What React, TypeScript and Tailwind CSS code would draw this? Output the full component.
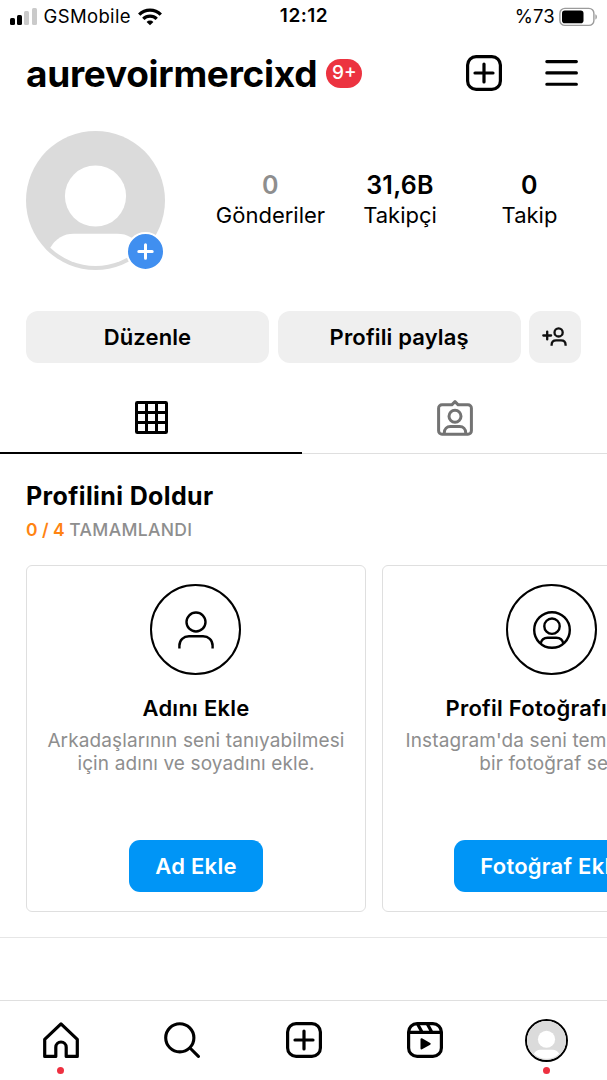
import type { ReactNode } from "react";
import { cx } from "class-variance-authority";

// ── Icons ──────────────────────────────────
function WifiIcon() {
  return (
    <svg width="24" height="18" viewBox="0 0 24 18" fill="none" stroke="#000" strokeWidth="3.3">
      <path d="M1.2 6.6a15.3 15.3 0 0 1 21.6 0" />
      <path d="M5.3 10.9a9.5 9.5 0 0 1 13.4 0" />
      <path d="M12 17.3 8.6 13.9a4.8 4.8 0 0 1 6.8 0Z" fill="#000" stroke="none" />
    </svg>
  );
}

function BatteryIcon() {
  return (
    <svg width="39" height="20" viewBox="0 0 39 20" fill="none">
      <rect x="0.9" y="1.4" width="34" height="17" rx="5" stroke="#9b9b9b" strokeWidth="1.4" />
      <rect x="3" y="3.6" width="21.5" height="12.6" rx="2.8" fill="#000" />
      <path d="M36.4 7.2c2 .8 2 4.6 0 5.4Z" fill="#9b9b9b" />
    </svg>
  );
}

function PlusBoxIcon() {
  return (
    <svg width="36" height="36" viewBox="0 0 36 36" fill="none" stroke="#000" strokeWidth="3.2" strokeLinecap="round">
      <rect x="1.6" y="1.6" width="32.8" height="32.8" rx="8.5" />
      <path d="M18 9v18M9 18h18" />
    </svg>
  );
}

function MenuIcon() {
  return (
    <svg width="33" height="28" viewBox="0 0 33 28" stroke="#000" strokeWidth="3.1" strokeLinecap="round">
      <path d="M1.8 2.6h29.6M1.8 13.9h29.6M1.8 25.2h29.6" />
    </svg>
  );
}

function AvatarIcon({ size }: { size: number }) {
  return (
    <svg width={size} height={size} viewBox="0 0 140 140" className="block">
      <circle cx="70" cy="70" r="70" fill="#dbdbdb" />
      <circle cx="70" cy="65.5" r="30.8" fill="#fff" />
      <path d="M24.4 117.5Q33 103.5 48 103.5H92Q107 103.5 115.6 117.5A65.8 65.8 0 0 1 24.4 117.5Z" fill="#fff" />
    </svg>
  );
}

function AddPersonIcon() {
  return (
    <svg width="26" height="20" viewBox="0 0 26 20" fill="none" stroke="#111" strokeWidth="2.3">
      <path d="M5.2 4.6v7.8M1.3 8.5h7.8" strokeLinecap="round" />
      <circle cx="16.6" cy="5.4" r="4.1" />
      <path d="M9.6 18.8v-.9c0-2.9 1.9-4.6 4.6-4.6h4.8c2.7 0 4.6 1.7 4.6 4.6v.9" />
    </svg>
  );
}

function GridIcon() {
  return (
    <svg width="33" height="33" viewBox="0 0 33 33" fill="none" stroke="#000" strokeWidth="3">
      <rect x="1.5" y="1.5" width="30" height="30" rx="0.8" />
      <path d="M11.5 1.5v30M21.5 1.5v30M1.5 11.5h30M1.5 21.5h30" />
    </svg>
  );
}

function TaggedIcon() {
  return (
    <svg width="36" height="36" viewBox="0 0 36 36" fill="none" stroke="#737373" strokeWidth="3" strokeLinejoin="round">
      <path d="M14.8 4.8 18 1.7l3.2 3.1H31a3.4 3.4 0 0 1 3.4 3.4v22.6a3.4 3.4 0 0 1-3.4 3.4H5a3.4 3.4 0 0 1-3.4-3.4V8.2A3.4 3.4 0 0 1 5 4.8Z" />
      <circle cx="18" cy="16.2" r="6" />
      <path d="M7.3 34v-1.2c0-4 2.6-6.2 6-6.2h9.4c3.4 0 6 2.2 6 6.2V34" />
    </svg>
  );
}

function PersonIcon() {
  return (
    <svg width="36" height="38" viewBox="0 0 36 38" fill="none" stroke="#000" strokeWidth="2.4">
      <circle cx="18" cy="11" r="9.5" />
      <path d="M1.4 37.4v-2.6c0-6 4.2-9.5 9.6-9.5h14c5.4 0 9.6 3.5 9.6 9.5v2.6" />
    </svg>
  );
}

function PersonCircleIcon() {
  return (
    <svg width="38" height="38" viewBox="0 0 38 38" fill="none" stroke="#000" strokeWidth="2.4">
      <circle cx="19" cy="19" r="17.8" />
      <circle cx="19" cy="15.2" r="7.7" />
      <path d="M7.6 32.6c.8-3.6 3.5-5.8 7-5.8h8.8c3.5 0 6.2 2.2 7 5.8" />
    </svg>
  );
}

function HomeIcon() {
  return (
    <svg width="36" height="36" viewBox="0 0 36 36" fill="none" stroke="#000" strokeWidth="3.2" strokeLinejoin="round">
      <path d="M1.7 34.4V17.3L18 1.9l16.3 15.4v17.1H23.2V25.2a5.2 5.2 0 0 0-10.4 0v9.2Z" />
    </svg>
  );
}

function SearchIcon() {
  return (
    <svg width="36" height="36" viewBox="0 0 36 36" fill="none" stroke="#000" strokeWidth="3.1" strokeLinecap="round">
      <circle cx="15.8" cy="15.8" r="14.1" />
      <path d="m26 26 8.4 8.4" />
    </svg>
  );
}

function ReelsIcon() {
  return (
    <svg width="36" height="36" viewBox="0 0 36 36" fill="none" stroke="#000" strokeWidth="3.2">
      <rect x="1.6" y="1.6" width="32.8" height="32.8" rx="8.5" />
      <path d="M1.5 10.4h33M10.4 1.8l4.7 8.4M20.2 1.8l4.7 8.4" />
      <path d="M14.5 17.2v9.2l8.2-4.6Z" fill="#000" strokeWidth="2" strokeLinejoin="round" />
    </svg>
  );
}

// ── Profile stats ──────────────────────────
const STATS = [
  { value: "0", label: "Gönderiler", muted: true, width: "w-[130px]" },
  { value: "31,6B", label: "Takipçi", muted: false, width: "w-[129px]" },
  { value: "0", label: "Takip", muted: false, width: "w-[130px]" },
];

function Stat({ value, label, muted, width }: (typeof STATS)[number]) {
  return (
    <div className={cx("flex flex-col items-center", width)}>
      <span className={cx("text-[25px] leading-[30px] font-semibold tracking-[0.3px]", muted && "text-[#8e8e8e]")}>
        {value}
      </span>
      <span className="text-[22px] leading-[30px]">{label}</span>
    </div>
  );
}

// ── Onboarding card ────────────────────────
type SetupCardProps = {
  icon: ReactNode;
  title: string;
  lines: string[];
  action: string;
};

function SetupCard({ icon, title, lines, action }: SetupCardProps) {
  return (
    <article className="flex h-[347px] w-[340px] shrink-0 flex-col items-center rounded-md border border-[#dfdfdf] pt-[18px] pb-[19px]">
      <div className="-ml-px flex size-[91px] items-center justify-center rounded-full border-[2.5px] border-black">
        {icon}
      </div>
      <h3 className="mt-[18px] text-[22px] leading-[30px] font-semibold tracking-[0.25px] whitespace-nowrap">
        {title}
      </h3>
      <p className="mt-[7px] text-center text-[19px] leading-[22.5px] tracking-[0.12px] whitespace-nowrap text-[#8e8e8e]">
        {lines.map((line) => (
          <span key={line} className="block">
            {line}
          </span>
        ))}
      </p>
      <button
        type="button"
        className="mt-auto h-[52px] rounded-[11px] bg-[#0095f6] px-[26px] text-[22px] font-semibold tracking-[0.25px] whitespace-nowrap text-white"
      >
        {action}
      </button>
    </article>
  );
}

// ── Bottom navigation ──────────────────────
function NavItem({ children, dot }: { children: ReactNode; dot?: boolean }) {
  return (
    <div className="flex flex-1 flex-col items-center">
      <div className="flex h-[46px] items-center">{children}</div>
      {dot && <span className="mt-1 size-[6.5px] rounded-full bg-[#ee3040]" />}
    </div>
  );
}

export default function App() {
  return (
    <div className="flex h-[1080px] w-[607px] flex-col overflow-hidden bg-white font-['Inter',sans-serif] text-black">
      {/* Status bar */}
      <div className="grid h-8 grid-cols-3 items-center pt-px pr-[9px] pl-[10px] text-[18.5px]">
        <div className="flex items-center">
          <div className="mr-[7px] flex items-end gap-[2.2px]">
            <span className="h-[7px] w-[5px] rounded-[1.5px] bg-black" />
            <span className="h-[10px] w-[5px] rounded-[1.5px] bg-black" />
            <span className="h-[14px] w-[5px] rounded-[1.5px] bg-[#cacaca]" />
            <span className="h-[17px] w-[5px] rounded-[1.5px] bg-[#cacaca]" />
          </div>
          <span className="mr-[7px] tracking-[0.35px]">GSMobile</span>
          <WifiIcon />
        </div>
        <span className="text-center text-[19px] font-semibold tracking-[0.5px]">12:12</span>
        <div className="flex items-center justify-end gap-1">
          <span className="tracking-[0.2px]">%73</span>
          <BatteryIcon />
        </div>
      </div>

      {/* Header */}
      <header className="flex h-[82px] items-center pr-[29px] pl-[26px]">
        <h1 className="text-[37px] leading-none font-bold tracking-[-0.28px]">aurevoirmercixd</h1>
        <span className="ml-[9px] flex h-[29px] w-9 items-center justify-center rounded-full bg-[#ec3340] pt-px text-[19px] font-medium text-white">
          9+
        </span>
        <div className="ml-auto flex items-center gap-[43px]">
          <PlusBoxIcon />
          <MenuIcon />
        </div>
      </header>

      {/* Avatar and counters */}
      <section className="mt-[17px] flex h-[139px] pl-[26px]">
        <div className="relative size-[139px]">
          <AvatarIcon size={139} />
          <span className="absolute right-0 -bottom-px flex size-[39px] items-center justify-center rounded-full border-[2.5px] border-white bg-[#408ff0]">
            <svg width="17" height="17" viewBox="0 0 17 17" stroke="#fff" strokeWidth="3" strokeLinecap="round">
              <path d="M8.5 1.8v13.4M1.8 8.5h13.4" />
            </svg>
          </span>
        </div>
        <div className="mt-[39px] ml-[40.5px] flex">
          {STATS.map((stat) => (
            <Stat key={stat.label} {...stat} />
          ))}
        </div>
      </section>

      {/* Profile actions */}
      <div className="mt-[41px] flex h-[51.5px] gap-[8.7px] px-[26px] text-[22px] font-semibold">
        <button type="button" className="w-[243px] rounded-xl bg-[#efefef] pt-px tracking-[0.1px]">
          Düzenle
        </button>
        <button type="button" className="w-[243px] rounded-xl bg-[#efefef] pt-px tracking-[0.15px]">
          Profili paylaş
        </button>
        <button type="button" className="flex flex-1 items-center justify-center rounded-xl bg-[#efefef]">
          <AddPersonIcon />
        </button>
      </div>

      {/* Tabs */}
      <div className="mt-[18.5px] flex h-[73px]">
        <div className="flex w-[302px] justify-center border-b-2 border-black pt-5">
          <GridIcon />
        </div>
        <div className="flex flex-1 justify-center border-b border-[#dfdfdf] pt-[19px]">
          <TaggedIcon />
        </div>
      </div>

      {/* Profile completion */}
      <section className="border-b border-[#e6e6e6] pb-[25px] pl-[26px]">
        <h2 className="mt-[26px] text-[25px] leading-8 font-bold tracking-[0.38px]">Profilini Doldur</h2>
        <p className="mt-1.5 text-[17.5px] leading-6 font-medium text-[#8e8e8e]">
          <span className="font-semibold text-[#ff8412]">0 / 4</span>{" "}
          <span className="tracking-[0.35px]">TAMAMLANDI</span>
        </p>
        <div className="mt-[23px] flex gap-4">
          <SetupCard
            icon={<PersonIcon />}
            title="Adını Ekle"
            lines={["Arkadaşlarının seni tanıyabilmesi", "için adını ve soyadını ekle."]}
            action="Ad Ekle"
          />
          <SetupCard
            icon={<PersonCircleIcon />}
            title="Profil Fotoğrafı Ekle"
            lines={["Instagram'da seni temsil edecek", "bir fotoğraf seç."]}
            action="Fotoğraf Ekle"
          />
        </div>
      </section>

      {/* Bottom navigation */}
      <nav className="mt-auto flex h-20 border-t border-[#dfdfdf] pt-4">
        <NavItem dot>
          <HomeIcon />
        </NavItem>
        <NavItem>
          <SearchIcon />
        </NavItem>
        <NavItem>
          <PlusBoxIcon />
        </NavItem>
        <NavItem>
          <ReelsIcon />
        </NavItem>
        <NavItem dot>
          <div className="rounded-full border-2 border-black">
            <AvatarIcon size={39} />
          </div>
        </NavItem>
      </nav>
    </div>
  );
}
